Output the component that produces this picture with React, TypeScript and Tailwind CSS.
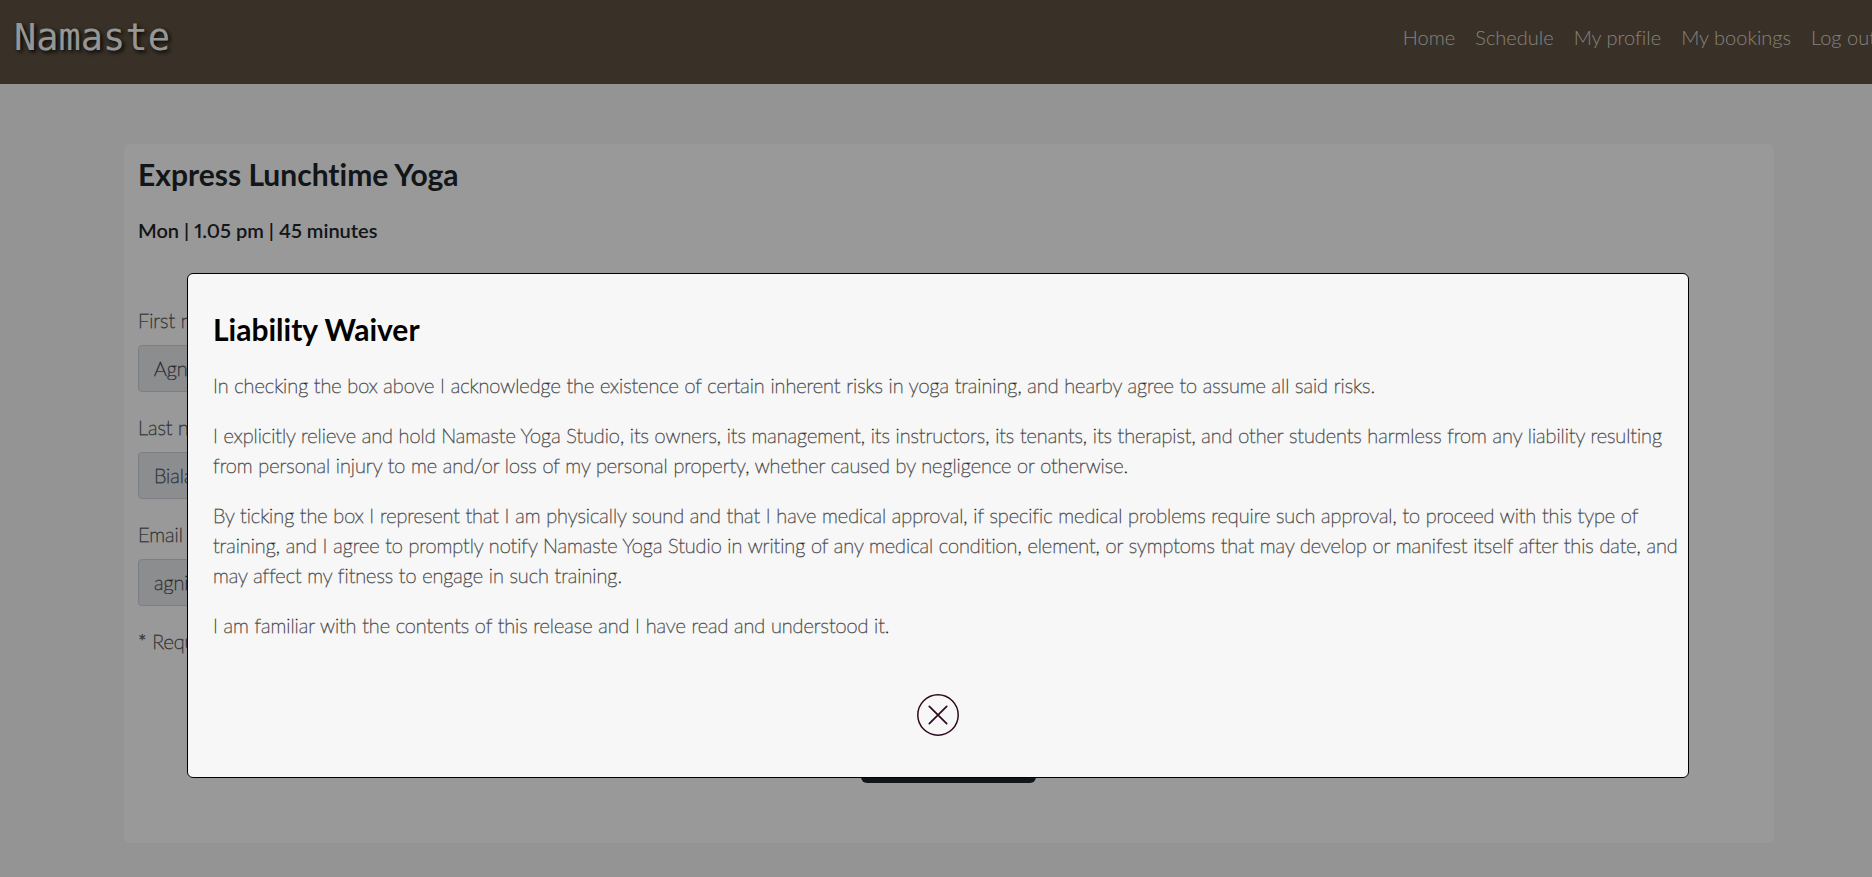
import React from "react";

const links = ["Home", "Schedule", "My profile", "My bookings", "Log out"];

const fields = [
  { id: "first-name", label: "First name*", value: "Agnieszka", type: "text" },
  { id: "last-name", label: "Last name*", value: "Bialas", type: "text" },
  { id: "email", label: "Email address*", value: "agnieszka@example.com", type: "email" },
];

const waiver = [
  "In checking the box above I acknowledge the existence of certain inherent risks in yoga training, and hearby agree to assume all said risks.",
  "I explicitly relieve and hold Namaste Yoga Studio, its owners, its management, its instructors, its tenants, its therapist, and other students harmless from any liability resulting from personal injury to me and/or loss of my personal property, whether caused by negligence or otherwise.",
  "By ticking the box I represent that I am physically sound and that I have medical approval, if specific medical problems require such approval, to proceed with this type of training, and I agree to promptly notify Namaste Yoga Studio in writing of any medical condition, element, or symptoms that may develop or manifest itself after this date, and may affect my fitness to engage in such training.",
  "I am familiar with the contents of this release and I have read and understood it.",
];

function NavBar() {
  return (
    <header className="flex h-[84px] items-start justify-between bg-[#5f5241] pt-3 pl-[14px]">
      <a
        href="#"
        className="font-['DejaVu_Sans_Mono',monospace] text-[37px] leading-[52px] text-[#fafafa] [text-shadow:2px_2px_4px_#000000]"
      >
        Namaste
      </a>
      <nav className="-mr-1 flex gap-5 pt-[10px] whitespace-nowrap">
        {links.map((link) => (
          <a key={link} href="#" className="text-[20px] leading-[30px] font-light text-[#dcd8d2]">
            {link}
          </a>
        ))}
      </nav>
    </header>
  );
}

function BookingCard() {
  return (
    <main className="mt-[60px] mr-[98px] ml-[124px] rounded-md bg-white pt-3 pr-4 pb-[60px] pl-[14px] text-[#212529]">
      <h1 className="text-[30px] leading-[36px] font-bold">Express Lunchtime Yoga</h1>
      <h2 className="mt-[26px] text-[20px] leading-[24px] font-semibold [font-variant-numeric:proportional-nums]">
        Mon | 1.05 pm | 45 minutes
      </h2>
      <form className="mt-[63px]">
        {fields.map((field) => (
          <div key={field.id} className="mb-5">
            <label
              htmlFor={field.id}
              className="mb-[10px] block text-[20px] leading-[30px] font-thin [-webkit-text-stroke:1px_rgba(33,37,41,0.6)]"
            >
              {field.label}
            </label>
            <input
              id={field.id}
              type={field.type}
              defaultValue={field.value}
              readOnly
              className="block h-[47px] w-1/2 rounded border border-[#ced4da] bg-[#e9ecef] px-[15px] pb-[2px] text-[20px] font-thin text-[#212529] [-webkit-text-stroke:1px_rgba(33,37,41,0.6)]"
            />
          </div>
        ))}
        <p className="text-[20px] leading-[30px] font-thin [-webkit-text-stroke:1px_rgba(33,37,41,0.6)]">* Required fields</p>
        <div className="mt-20 flex justify-center">
          <button type="submit" className="h-[47px] w-[175px] rounded-md bg-[#212529] text-[20px] font-light text-white">
            Book class
          </button>
        </div>
      </form>
    </main>
  );
}

function WaiverDialog() {
  return (
    <div className="absolute inset-0 bg-black/40 pt-[273px] pr-[183px] pl-[187px]">
      <section
        role="dialog"
        aria-modal="true"
        aria-labelledby="waiver-title"
        className="rounded-md border border-black bg-[#f7f7f7] pt-[37px] pb-[41px] text-black"
      >
        <h2 id="waiver-title" className="mb-[23px] pl-[25px] text-[30px] leading-[36px] font-bold">
          Liability Waiver
        </h2>
        <div className="flex flex-col gap-5 pr-2 pl-[25px] text-[20px] leading-[30px] font-thin [-webkit-text-stroke:1px_rgba(0,0,0,0.5)]">
          {waiver.map((text) => (
            <p key={text}>{text}</p>
          ))}
        </div>
        <div className="mt-[54px] flex justify-center">
          <button type="button" aria-label="Close" className="size-[42px]">
            <svg viewBox="0 0 42 42" fill="none" stroke="#2d0a1e" strokeLinecap="round" className="size-full">
              <circle cx="21" cy="21" r="20.2" strokeWidth="1.5" />
              <path d="M12.3 12.3 29.7 29.7M29.7 12.3 12.3 29.7" strokeWidth="1.7" />
            </svg>
          </button>
        </div>
      </section>
    </div>
  );
}

export default function App() {
  return (
    <div className="relative h-screen overflow-hidden bg-[#f7f7f7] font-['Lato',sans-serif] [font-variant-ligatures:no-common-ligatures]">
      <NavBar />
      <BookingCard />
      <WaiverDialog />
    </div>
  );
}
